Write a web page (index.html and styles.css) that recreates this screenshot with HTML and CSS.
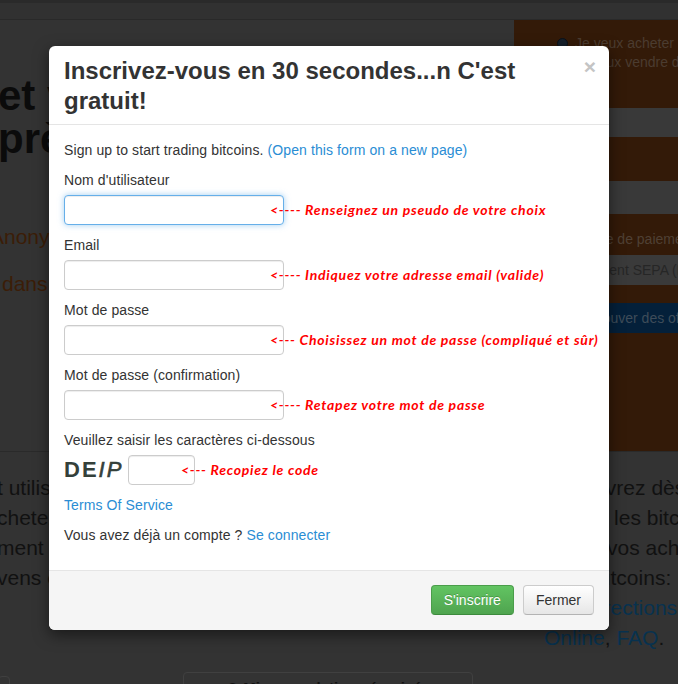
FILE: index.html
```html
<!DOCTYPE html>
<html lang="fr">
<head>
    <meta charset="UTF-8">
    <meta name="viewport" content="width=device-width, initial-scale=1.0">
    <title>Inscription</title>
    <link rel="stylesheet" href="styles.css">
</head>
<body>
    <div class="navbar"></div>

    <div class="hero">
        <div class="hero-main">
            <h1>et vendez des<br>près de chez vous</h1>
            <p class="lead lead-a">Anonyme et sans frais</p>
            <p class="lead lead-b">dans toute la France</p>
        </div>
        <div class="side">
            <div class="side-radios">
                <div class="radio-line"><span class="radio"></span>Je veux acheter</div>
                <div class="radio-line"><span class="radio"></span>Je veux vendre des</div>
            </div>
            <div class="side-input"></div>
            <div class="side-gap"></div>
            <div class="side-input side-input-b"></div>
            <div class="side-pay">
                <div class="side-label">Méthode de paiement</div>
                <div class="side-select">Virement SEPA (EUR)</div>
                <div class="side-btn">Trouver des offres</div>
            </div>
        </div>
    </div>

    <div class="features">
        <div class="col-left">t utilisateur<br>chetez<br>ment<br>vens chez</div>
        <div class="col-mid"></div>
        <div class="col-right">
            Vous livrez dès<br>
            vendre les bitcoins<br>
            réglez vos achats<br>
            avec bitcoins:<br>
            <a href="#">Les Directions Chat</a><br>
            <a href="#">Online</a>, <a href="#">FAQ</a>.
        </div>
    </div>

    <div class="bottom-row">
        <div class="ghost ghost-small"></div>
        <div class="ghost ghost-wide">&#9678; Mise en relation sécurisée</div>
    </div>

    <div class="modal">
        <div class="modal-header">
            <button class="close" type="button">&times;</button>
            <h3 class="modal-title">Inscrivez-vous en 30 secondes...n C'est gratuit!</h3>
        </div>
        <div class="modal-body">
            <p>Sign up to start trading bitcoins. <a href="#">(Open this form on a new page)</a></p>

            <div class="form-group">
                <label for="username">Nom d'utilisateur</label>
                <div class="field">
                    <input type="text" id="username" class="form-control is-focus">
                    <span class="hint">&lt;---- Renseignez un pseudo de votre choix</span>
                </div>
            </div>
            <div class="form-group">
                <label for="email">Email</label>
                <div class="field">
                    <input type="text" id="email" class="form-control">
                    <span class="hint">&lt;---- Indiquez votre adresse email (valide)</span>
                </div>
            </div>
            <div class="form-group">
                <label for="password">Mot de passe</label>
                <div class="field">
                    <input type="password" id="password" class="form-control">
                    <span class="hint">&lt;--- Choisissez un mot de passe (compliqué et sûr)</span>
                </div>
            </div>
            <div class="form-group">
                <label for="password2">Mot de passe (confirmation)</label>
                <div class="field">
                    <input type="password" id="password2" class="form-control">
                    <span class="hint">&lt;---- Retapez votre mot de passe</span>
                </div>
            </div>
            <div class="form-group">
                <label for="captcha">Veuillez saisir les caractères ci-dessous</label>
                <div class="field">
                    <span class="captcha">DE<i>IP</i></span>
                    <input type="text" id="captcha" class="form-control captcha-input">
                    <span class="hint">&lt;--- Recopiez le code</span>
                </div>
            </div>

            <p><a href="#">Terms Of Service</a></p>
            <p>Vous avez déjà un compte ? <a href="#">Se connecter</a></p>
        </div>
        <div class="modal-footer">
            <button class="btn btn-success" type="button">S'inscrire</button>
            <button class="btn btn-default" type="button">Fermer</button>
        </div>
    </div>
</body>
</html>
```

FILE: styles.css
```css
* {
    box-sizing: border-box;
}
html {
    overflow: hidden;
}
body {
    margin: 0;
    position: relative;
    height: 684px;
    overflow: hidden;
    font-family: "Liberation Sans", Arial, sans-serif;
    font-size: 14px;
    line-height: 20px;
    color: #333333;
    background: #333333;
}
a {
    color: #2a8dd4;
    text-decoration: none;
}

/* page behind the modal (already dimmed) */
.navbar {
    height: 20px;
    background: #313131;
    border-top: 3px solid #2a2a2a;
    border-bottom: 1px solid #292929;
}
.hero {
    display: flex;
    height: 432px;
    border-bottom: 1px solid #2a2a2a;
    overflow: hidden;
}
.hero-main {
    flex: 1;
    white-space: nowrap;
}
.hero-main h1 {
    margin: 54px 0 0 -2px;
    font-size: 42px;
    line-height: 43px;
    font-weight: bold;
    color: #0b0b0b;
}
.lead {
    font-size: 21px;
    line-height: 30px;
    color: #3b1d07;
}
.lead-a {
    margin: 62px 0 0 -10px;
}
.lead-b {
    margin: 17px 0 0 2px;
}
.side {
    width: 164px;
    flex-shrink: 0;
    white-space: nowrap;
    overflow: hidden;
}
.side-radios {
    height: 88px;
    padding: 14px 0 0 43px;
    background: #331a08;
    color: #4b3c30;
}
.radio-line {
    display: flex;
    align-items: center;
    gap: 7px;
    line-height: 19px;
}
.radio-line + .radio-line {
    margin-left: 7px;
}
.radio {
    width: 11px;
    height: 11px;
    border-radius: 50%;
    background: #16202b;
    border: 1px solid #0b1119;
}
.side-input {
    height: 29px;
    background: #393939;
}
.side-gap {
    height: 44px;
    background: #331a08;
}
.side-input-b {
    height: 33px;
}
.side-pay {
    height: 237px;
    padding: 15px 0 0 45px;
    background: #331a08;
}
.side-label {
    color: #4f4034;
}
.side-select {
    height: 30px;
    margin: 6px 0 0 -2px;
    padding: 5px 0 0 16px;
    background: #3a3a3a;
    color: #262626;
}
.side-btn {
    height: 30px;
    margin: 18px 0 0 -2px;
    padding: 5px 0 0 33px;
    background: #04203a;
    color: #3e4c59;
}

.features {
    display: flex;
    padding-top: 21px;
    font-size: 21px;
    line-height: 30px;
    color: #111111;
    white-space: nowrap;
    overflow: hidden;
}
.features a {
    color: #08324f;
}
.col-left {
    width: 177px;
    flex-shrink: 0;
    margin-left: -3px;
    overflow: hidden;
}
.col-mid {
    width: 370px;
    flex-shrink: 0;
}
.col-right {
    flex: 1;
    overflow: hidden;
}
.bottom-row {
    display: flex;
    margin-top: 19px;
}
.ghost {
    flex-shrink: 0;
    border: 1px solid #404040;
    border-radius: 4px;
}
.ghost-small {
    width: 12px;
    height: 20px;
    margin: 4px 0 0 -2px;
}
.ghost-wide {
    width: 290px;
    height: 30px;
    margin-left: 173px;
    padding-top: 5px;
    text-align: center;
    font-size: 15px;
    font-weight: bold;
    color: #121212;
}

/* modal */
.modal {
    position: absolute;
    left: 49px;
    top: 46px;
    width: 560px;
    background: #ffffff;
    border-radius: 6px;
    box-shadow: 0 5px 15px rgba(0, 0, 0, 0.5);
    overflow: hidden;
}
.modal-header {
    padding: 10px 15px 8px;
    border-bottom: 1px solid #e5e5e5;
}
.modal-title {
    margin: 0;
    font-size: 24px;
    line-height: 30px;
    font-weight: bold;
    color: #333333;
}
.close {
    float: right;
    margin: 0 -2px 0 20px;
    padding: 0;
    border: none;
    background: none;
    font-family: "Liberation Sans", Arial, sans-serif;
    font-size: 21px;
    font-weight: bold;
    line-height: 21px;
    color: #c4c4c4;
    cursor: pointer;
}
.modal-body {
    padding: 15px;
    letter-spacing: 0.1px;
}
.modal-body p {
    margin: 0 0 10px;
}
.form-group {
    margin-bottom: 10px;
}
.form-group label {
    display: block;
    margin-bottom: 5px;
}
.field {
    display: flex;
    align-items: center;
}
.form-control {
    flex-shrink: 0;
    width: 220px;
    height: 30px;
    padding: 4px 8px;
    font-size: 14px;
    border: 1px solid #cccccc;
    border-radius: 4px;
    box-shadow: inset 0 1px 1px rgba(0, 0, 0, 0.075);
}
.is-focus {
    border-color: #66afe9;
    box-shadow: inset 0 1px 1px rgba(0, 0, 0, 0.075), 0 0 6px rgba(102, 175, 233, 0.6);
}
.hint {
    position: relative;
    margin-left: -14px;
    font-family: Lato, "DejaVu Sans", sans-serif;
    font-size: 14px;
    font-weight: bold;
    font-style: italic;
    letter-spacing: 0.75px;
    color: #ff0000;
    white-space: nowrap;
}
.captcha {
    flex-shrink: 0;
    width: 64px;
    font-size: 22px;
    font-weight: bold;
    letter-spacing: 2px;
    color: #34403a;
}
.captcha i {
    font-weight: normal;
    -webkit-text-stroke: 0.6px #34403a;
}
.captcha-input {
    width: 67px;
}
.modal-footer {
    display: flex;
    justify-content: flex-end;
    gap: 9px;
    padding: 14px 15px 15px;
    background: #f5f5f5;
    border-top: 1px solid #e5e5e5;
}
.btn {
    height: 30px;
    padding: 0 12px;
    font-family: "Liberation Sans", Arial, sans-serif;
    font-size: 14px;
    border: 1px solid;
    border-radius: 4px;
    cursor: pointer;
}
.btn-success {
    color: #ffffff;
    background: linear-gradient(#62c462, #4fa44f);
    border-color: #4a9d4a #4a9d4a #3c8a3c;
    text-shadow: 0 -1px 0 rgba(0, 0, 0, 0.2);
}
.btn-default {
    color: #333333;
    background: linear-gradient(#ffffff, #e6e6e6);
    border-color: #cccccc #cccccc #b3b3b3;
}
```
